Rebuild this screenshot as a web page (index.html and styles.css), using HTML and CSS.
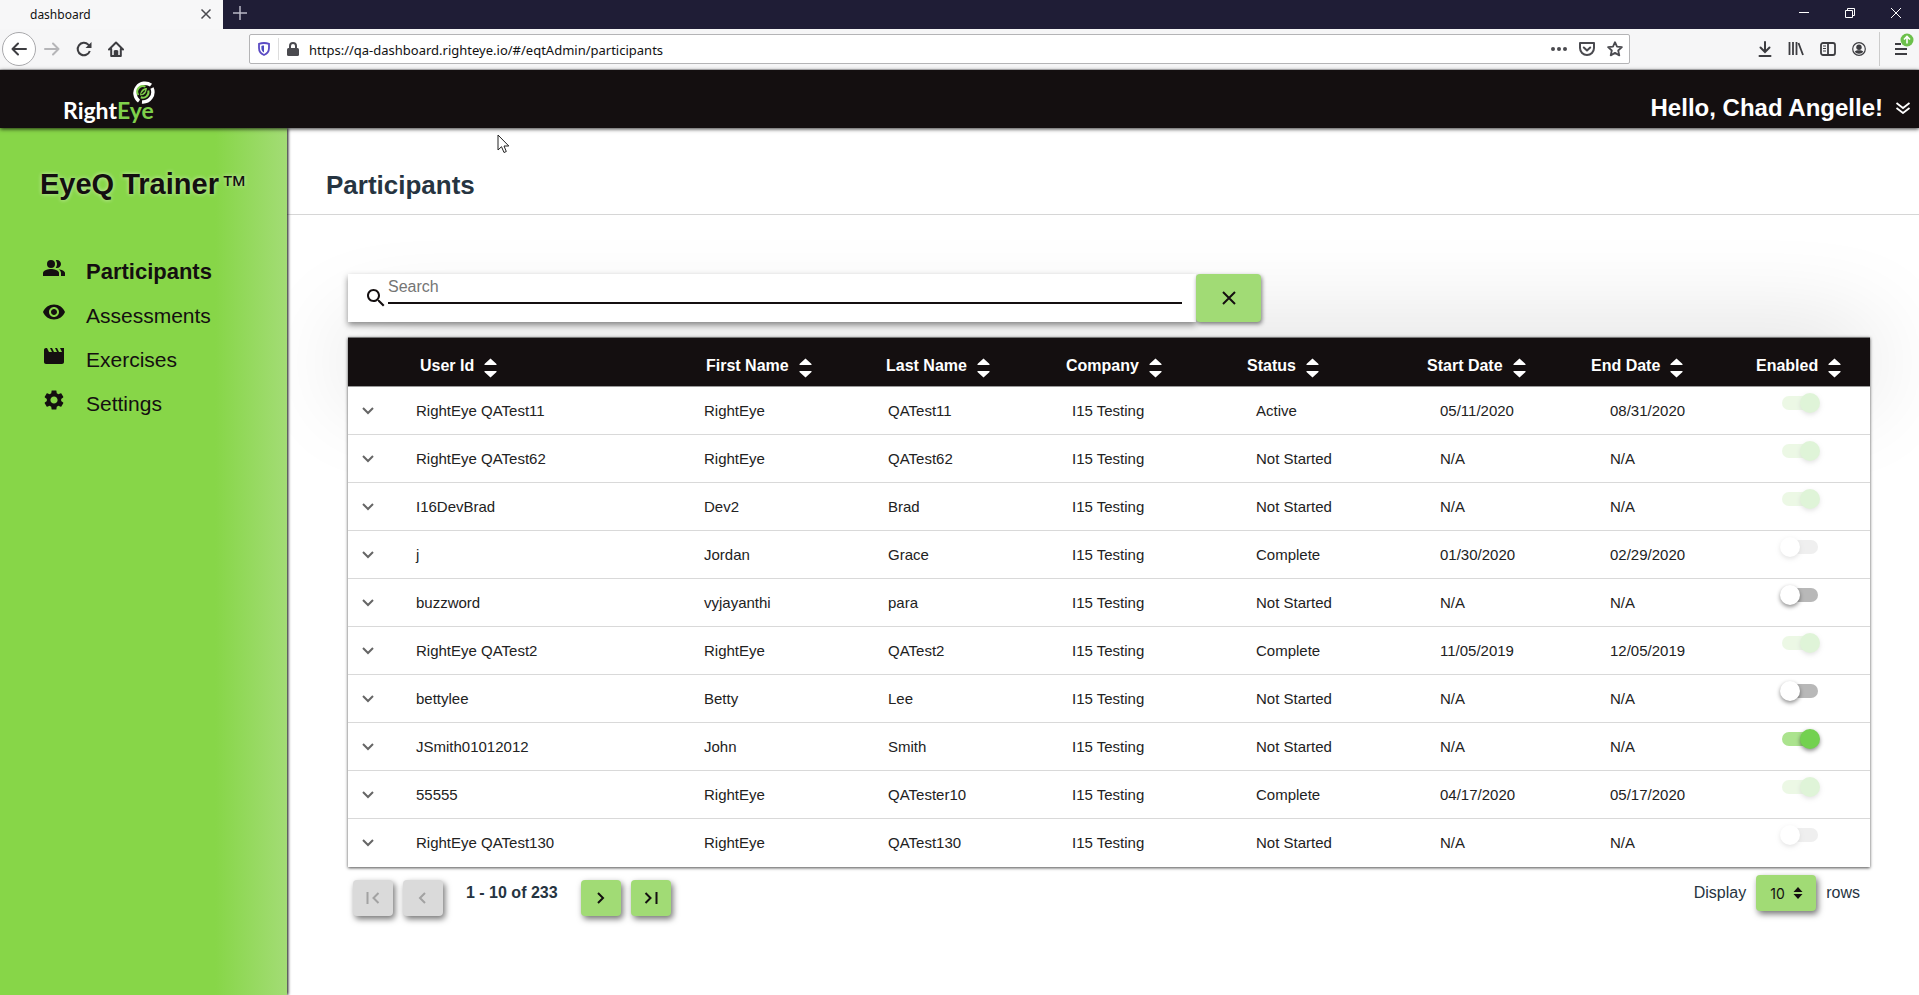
FILE: index.html
```html
<!DOCTYPE html>
<html lang="en">
<head>
<meta charset="utf-8">
<title>dashboard</title>
<link rel="stylesheet" href="styles.css">
</head>
<body>
<div class="chrome">
  <div class="tabstrip">
    <div class="tab"><span>dashboard</span>
      <button class="plain" aria-label="Close tab"><svg width="12" height="12" viewBox="0 0 12 12"><path d="M1.500 1.500l9 9M10.500 1.500l-9 9" stroke="#4a4a4f" stroke-width="1.500"/></svg></button>
    </div>
    <button class="plain newtab" aria-label="New tab"><svg width="14" height="14" viewBox="0 0 14 14"><path d="M7 0v14M0 7h14" stroke="#b9b8c6" stroke-width="1.500"/></svg></button>
    <div class="winctl">
      <button class="plain" aria-label="Minimize"><svg width="12" height="12" viewBox="0 0 12 12"><path d="M1 5.500h10" stroke="#fff"/></svg></button>
      <button class="plain" aria-label="Restore"><svg width="12" height="12" viewBox="0 0 12 12" fill="none" stroke="#fff"><path d="M1.500 3.500h7v7h-7zM3.500 3.500v-2h7v7h-2"/></svg></button>
      <button class="plain" aria-label="Close"><svg width="12" height="12" viewBox="0 0 12 12"><path d="M1 1l10 10M11 1L1 11" stroke="#fff"/></svg></button>
    </div>
  </div>
  <div class="toolbar">
    <div class="navbtns">
      <button class="plain back" aria-label="Back"><svg width="16" height="16" viewBox="0 0 16 16" fill="none" stroke="#3d3d41" stroke-width="2" stroke-linecap="round" stroke-linejoin="round"><path d="M15 8H1.500M7 2.500L1.500 8 7 13.500"/></svg></button>
      <button class="plain" aria-label="Forward"><svg width="16" height="16" viewBox="0 0 16 16" fill="none" stroke="#b5b5b8" stroke-width="2" stroke-linecap="round" stroke-linejoin="round"><path d="M1 8h13.500M9 2.500L14.500 8 9 13.500"/></svg></button>
      <button class="plain" aria-label="Reload"><svg width="16" height="16" viewBox="0 0 16 16" fill="none" stroke="#3d3d41" stroke-width="2"><path d="M13.800 10A6.200 6.200 0 1 1 12.300 3.600L14 5.500"/><path d="M15.500 1v6h-6z" fill="#3d3d41" stroke="none"/></svg></button>
      <button class="plain" aria-label="Home"><svg width="16" height="16" viewBox="0 0 16 16" fill="none" stroke="#3d3d41" stroke-width="2" stroke-linejoin="round" stroke-linecap="round"><path d="M1 8.500L8 1.500l7 7M3.200 8v7h9.600V8M8 14v-4"/><path d="M6.500 15v-5h3v5" stroke-width="1.500"/></svg></button>
    </div>
    <div class="urlbar">
      <svg width="12" height="14" viewBox="0 0 12 14" fill="none"><path d="M6 1c2 0 3.500.3 5 .9V6c0 3.500-2 5.800-5 7-3-1.200-5-3.500-5-7V1.900C2.500 1.300 4 1 6 1z" stroke="#5b4bc4" stroke-width="1.800"/><path d="M6 3.500v7C4.300 9.500 3.400 8 3.400 6V3.900c.8-.3 1.600-.4 2.600-.4z" fill="#4b4bc0"/></svg>
      <span class="sep"></span>
      <svg width="12" height="14" viewBox="0 0 12 14"><path d="M3 7V4a3 3 0 0 1 6 0v3" fill="none" stroke="#4a4a4f" stroke-width="2"/><rect y="6" width="12" height="8" rx="1.500" fill="#4a4a4f"/></svg>
      <input class="url" aria-label="Address" value="https://qa-dashboard.righteye.io/#/eqtAdmin/participants">
      <svg width="16" height="16" viewBox="0 0 16 16" fill="#4a4a4f"><circle cx="2" cy="8" r="2"/><circle cx="8" cy="8" r="2"/><circle cx="14" cy="8" r="2"/></svg>
      <svg width="16" height="16" viewBox="0 0 16 16" fill="none" stroke="#4a4a4f" stroke-width="2" stroke-linecap="round" stroke-linejoin="round"><path d="M1 2h14v5a7 7 0 0 1-14 0z"/><path d="M4.800 6.500L8 9.500l3.200-3"/></svg>
      <svg width="16" height="16" viewBox="0 0 16 16" fill="none" stroke="#4a4a4f" stroke-width="1.800" stroke-linejoin="round"><path d="M8 1.200l2 4.500 4.900.5-3.700 3.300 1.100 4.900L8 11.900l-4.300 2.500 1.100-4.900L1.100 6.200 6 5.700z"/></svg>
    </div>
    <div class="tools">
      <button class="plain" aria-label="Downloads"><svg width="14" height="16" viewBox="0 0 14 16" fill="none" stroke="#3d3d41" stroke-width="2" stroke-linecap="round"><path d="M7 1v9.500M2.500 6.500L7 11l4.500-4.500M1.500 15h11"/></svg></button>
      <button class="plain" aria-label="Library"><svg width="16" height="16" viewBox="0 0 16 16" fill="none" stroke="#3d3d41" stroke-width="1.800"><path d="M1.500 1v13M5 1v13M8.500 1v13M10.500 2l4.500 12"/></svg></button>
      <button class="plain" aria-label="Sidebars"><svg width="16" height="16" viewBox="0 0 16 16" fill="none" stroke="#3d3d41" stroke-width="1.800"><rect x="1" y="2" width="14" height="12" rx="2"/><path d="M8 2v12"/><path d="M3 5h3M3 7.500h3M3 10h3" stroke-width="1"/></svg></button>
      <button class="plain" aria-label="Account"><svg width="14" height="14" viewBox="0 0 14 14"><circle cx="7" cy="7" r="6.300" fill="none" stroke="#3d3d41" stroke-width="1.200"/><circle cx="7" cy="5.200" r="2.700" fill="#3d3d41"/><path d="M2.800 9.500c1.500-1.600 6.900-1.600 8.400 0-1.300 3-7.100 3-8.400 0z" fill="#3d3d41"/></svg></button>
      <button class="plain menu" aria-label="Open menu"><svg width="20" height="24" viewBox="0 0 20 24"><path d="M1 11h6M1 16h12M1 21h12" stroke="#3d3d41" stroke-width="2"/><circle cx="13" cy="7" r="6.500" fill="#6cc04a"/><path d="M13 10.500V4M10 6.500l3-3 3 3" fill="none" stroke="#fff" stroke-width="1.600"/></svg></button>
    </div>
  </div>
</div>

<header class="appbar">
  <a class="logo" href="#" aria-label="RightEye"><span>Right</span><span class="eye">Eye</span>
    <svg class="ring" width="24" height="24" viewBox="0 0 24 24" fill="none"><path d="M20 5.200A10 10 0 1 0 8 21.200" stroke="#fff" stroke-width="3.400"/><path d="M11 22A10 10 0 0 0 21 8" stroke="#fff" stroke-width="3.400"/><path d="M14.500 6.700A5.600 5.600 0 0 0 7.400 15M9.800 17.200A5.600 5.600 0 0 0 17.300 10.500" stroke="#7fd04b" stroke-width="2"/><path d="M16 8c-4 0-6.500 2-7 7.500 5 0 6.500-3 7-7.500z" fill="#7fd04b"/><path d="M10.500 13.800L13.800 10.500" stroke="#140f10" stroke-width="1.200"/></svg>
  </a>
  <button class="plain user">Hello, Chad Angelle!<svg width="16" height="12" viewBox="0 0 16 12" fill="none" stroke="#fff" stroke-width="1.800"><path d="M1.500 1L8 6l6.500-5M1.500 6L8 11l6.500-5"/></svg></button>
</header>

<div class="body">
  <nav class="side">
    <h1>EyeQ Trainer<span class="tm">™</span></h1>
    <ul>
      <li><a class="on" href="#"><svg width="24" height="24" viewBox="0 0 24 24"><path d="M16.670 13.130C18.040 14.060 19 15.320 19 17v3h4v-3c0-2.180-3.570-3.470-6.330-3.870zM15 12c2.210 0 4-1.790 4-4s-1.790-4-4-4c-.47 0-.91.1-1.330.24C14.500 5.270 15 6.580 15 8s-.5 2.730-1.330 3.760c.42.140.86.240 1.330.24z"/><circle cx="9" cy="8" r="4"/><path d="M9 13c-2.670 0-8 1.340-8 4v3h16v-3c0-2.660-5.330-4-8-4z"/></svg><span>Participants</span></a></li>
      <li><a href="#"><svg width="24" height="24" viewBox="0 0 24 24"><path d="M12 4.500C7 4.500 2.730 7.610 1 12c1.730 4.390 6 7.500 11 7.500s9.270-3.110 11-7.500c-1.730-4.390-6-7.500-11-7.500zM12 17c-2.760 0-5-2.240-5-5s2.240-5 5-5 5 2.240 5 5-2.240 5-5 5zm0-8c-1.660 0-3 1.340-3 3s1.340 3 3 3 3-1.340 3-3-1.340-3-3-3z"/></svg><span>Assessments</span></a></li>
      <li><a href="#"><svg width="24" height="24" viewBox="0 0 24 24"><path d="M18 4l2 4h-3l-2-4h-2l2 4h-3l-2-4H8l2 4H7L5 4H4c-1.100 0-1.990.9-1.990 2L2 18c0 1.100.9 2 2 2h16c1.100 0 2-.9 2-2V4h-4z"/></svg><span>Exercises</span></a></li>
      <li><a href="#"><svg width="24" height="24" viewBox="0 0 24 24"><path d="M19.140 12.940c.04-.3.060-.61.060-.94 0-.32-.02-.64-.07-.94l2.030-1.580c.18-.14.230-.41.120-.61l-1.920-3.320c-.12-.22-.37-.29-.59-.22l-2.390.96c-.5-.38-1.030-.7-1.620-.94l-.36-2.540c-.04-.24-.24-.41-.48-.41h-3.840c-.24 0-.43.170-.47.410l-.36 2.540c-.59.240-1.130.570-1.620.94l-2.390-.96c-.22-.08-.47 0-.59.220L2.740 8.870c-.12.210-.08.470.12.610l2.030 1.580c-.05.3-.09.630-.09.940s.02.640.07.940l-2.030 1.580c-.18.140-.23.410-.12.610l1.920 3.320c.12.220.37.290.59.220l2.390-.96c.5.380 1.030.7 1.620.94l.36 2.540c.05.240.24.410.48.410h3.840c.24 0 .44-.17.47-.41l.36-2.540c.59-.24 1.130-.56 1.620-.94l2.390.96c.22.080.47 0 .59-.22l1.920-3.320c.12-.22.070-.47-.12-.61l-2.010-1.580zM12 15.600c-1.980 0-3.600-1.620-3.600-3.600s1.620-3.600 3.600-3.600 3.600 1.620 3.600 3.600-1.620 3.600-3.600 3.600z"/></svg><span>Settings</span></a></li>
    </ul>
  </nav>

  <main class="main">
    <h2>Participants</h2>
    <section class="content">
      <div class="searchrow">
        <div class="searchcard">
          <svg width="24" height="24" viewBox="0 0 24 24" fill="#140f10"><path d="M15.500 14h-.79l-.28-.27C15.410 12.590 16 11.110 16 9.500 16 5.910 13.090 3 9.500 3S3 5.910 3 9.500 5.910 16 9.500 16c1.610 0 3.090-.59 4.230-1.570l.27.28v.79l5 4.990L20.490 19l-4.990-5zm-6 0C7.010 14 5 11.990 5 9.500S7.010 5 9.500 5 14 7.010 14 9.500 11.990 14 9.500 14z"/></svg>
          <input type="text" placeholder="Search" aria-label="Search">
        </div>
        <button class="clear" aria-label="Clear search"><svg width="14" height="14" viewBox="0 0 14 14"><path d="M1 1l12 12M13 1L1 13" stroke="#140f10" stroke-width="2"/></svg></button>
      </div>

      <table class="grid">
        <colgroup><col class="c0"><col class="c1"><col class="c2"><col class="c2"><col class="c2"><col class="c2"><col class="c6"><col class="c7"><col class="c8"></colgroup>
        <thead><tr id="head"></tr></thead>
        <tbody id="rows"></tbody>
      </table>

      <div class="pager">
        <div class="pages">
          <button disabled aria-label="First page"><svg width="14" height="12" viewBox="0 0 14 12"><path d="M1.500 0v12M12.500 1l-5 5 5 5"/></svg></button>
          <button disabled aria-label="Previous page"><svg width="14" height="12" viewBox="0 0 14 12"><path d="M9 1L4 6l5 5"/></svg></button>
          <strong>1 - 10 of 233</strong>
          <button aria-label="Next page"><svg width="14" height="12" viewBox="0 0 14 12"><path d="M4 1l5 5-5 5"/></svg></button>
          <button aria-label="Last page"><svg width="14" height="12" viewBox="0 0 14 12"><path d="M1.500 1l5 5-5 5M12.500 0v12"/></svg></button>
        </div>
        <div class="size">
          <label for="size">Display</label>
          <span class="pick"><select id="size"><option>10</option><option>25</option><option>50</option></select>
            <svg width="10" height="12" viewBox="0 0 10 12"><path d="M5 0l4.500 5h-9zM5 12l4.500-5h-9z" fill="#140f10"/></svg></span>
          <span>rows</span>
        </div>
      </div>
    </section>
  </main>
</div>
<svg class="pointer" width="13" height="20" viewBox="0 0 13 20"><path d="M1 1v15l3.500-3.300L7 18.500l2.300-1L7 12h4.800z" fill="#fff" stroke="#222"/></svg>
<script src="app.js"></script>
</body>
</html>
```

FILE: app.js
```javascript
const heads = ["User Id", "First Name", "Last Name", "Company", "Status", "Start Date", "End Date", "Enabled"];
const data = [
  ["RightEye QATest11", "RightEye", "QATest11", "Active", "05/11/2020", "08/31/2020", 1, 1],
  ["RightEye QATest62", "RightEye", "QATest62", "Not Started", "N/A", "N/A", 1, 1],
  ["I16DevBrad", "Dev2", "Brad", "Not Started", "N/A", "N/A", 1, 1],
  ["j", "Jordan", "Grace", "Complete", "01/30/2020", "02/29/2020", 0, 1],
  ["buzzword", "vyjayanthi", "para", "Not Started", "N/A", "N/A", 0, 0],
  ["RightEye QATest2", "RightEye", "QATest2", "Complete", "11/05/2019", "12/05/2019", 1, 1],
  ["bettylee", "Betty", "Lee", "Not Started", "N/A", "N/A", 0, 0],
  ["JSmith01012012", "John", "Smith", "Not Started", "N/A", "N/A", 1, 0],
  ["55555", "RightEye", "QATester10", "Complete", "04/17/2020", "05/17/2020", 1, 1],
  ["RightEye QATest130", "RightEye", "QATest130", "Not Started", "N/A", "N/A", 0, 1]
];
const sortIcon = '<svg width="13" height="20" viewBox="0 0 13 20" fill="#fff"><path d="M6.500.5L12.500 6v1H.5V6zM6.500 19.500L12.500 14v-1H.5v1z"/></svg>';
const chevron = '<svg width="12" height="8" viewBox="0 0 12 8" fill="none" stroke="#666" stroke-width="2"><path d="M1 1l5 5 5-5"/></svg>';
document.getElementById("head").innerHTML = "<th></th>" + heads.map((h, i) =>
  `<th class="h${i + 1}" scope="col"><button class="plain sort">${h}${sortIcon}</button></th>`).join("");
document.getElementById("rows").innerHTML = data.map(r => {
  const [id, first, last, status, start, end, on, locked] = r;
  const cells = [id, first, last, "I15 Testing", status, start, end].map(c => `<td>${c}</td>`).join("");
  return `<tr><td class="exp"><button class="plain" aria-label="Expand ${id}">${chevron}</button></td>${cells}` +
    `<td class="tog"><input type="checkbox" class="switch" role="switch" aria-label="Enabled: ${id}"${on ? " checked" : ""}${locked ? " disabled" : ""}></td></tr>`;
}).join("");
```

FILE: styles.css
```css
* { box-sizing: border-box; }
body {
  margin: 0;
  min-height: 100vh;
  display: flex;
  flex-direction: column;
  font-family: "Liberation Sans", Arial, sans-serif;
  font-size: 16px;
  color: #263441;
  background: #fff;
}
svg { display: block; flex: none; }
.plain {
  display: flex;
  align-items: center;
  justify-content: center;
  padding: 0;
  border: 0;
  background: none;
  color: inherit;
  font: inherit;
}

/* browser frame */
.chrome { font-family: "Noto Sans", sans-serif; font-size: 12px; border-bottom: 1px solid #c8c8ca; }
.tabstrip { display: flex; align-items: center; height: 29px; background: #1f1d36; }
.tab {
  display: flex;
  align-items: center;
  justify-content: space-between;
  align-self: stretch;
  width: 223px;
  padding: 0 11px 1px 30px;
  background: #f7f7f8;
  color: #111;
}
.newtab { margin: 0 auto 4px 10px; }
.winctl { display: flex; gap: 34px; padding: 0 17px 4px 0; }
.toolbar { display: flex; align-items: center; height: 40px; background: #f6f6f7; }
.navbtns { display: flex; align-items: center; gap: 16px; width: 249px; padding-left: 2px; }
.back { width: 34px; height: 34px; margin-right: -8px; border: 1px solid #a9a9ac; border-radius: 50%; background: #fff; }
.urlbar {
  display: flex;
  align-items: center;
  gap: 12px;
  flex: 1;
  height: 30px;
  padding: 0 6px 0 8px;
  border: 1px solid #b4b4b6;
  border-radius: 2px;
  background: #fff;
}
.sep { width: 1px; height: 22px; margin: 0 -4px 0 -4px; background: #ddd; }
.url { flex: 1; min-width: 0; padding: 2px 0 0; margin-left: -2px; border: 0; outline: 0; background: none; font: 13px "Noto Sans", sans-serif; color: #111; }
.tools { display: flex; align-items: center; gap: 16px; width: 289px; justify-content: flex-end; padding-right: 5px; }
.menu { padding: 0 0 8px 14px; border-left: 1px solid #ccc; height: 34px; margin-left: -3px; }

/* application bar */
.appbar {
  position: relative;
  z-index: 2;
  display: flex;
  justify-content: space-between;
  align-items: flex-end;
  height: 58px;
  padding: 0 8px 6px 63px;
  background: #140f10;
  color: #fff;
  box-shadow: 0 1px 4px rgba(0, 0, 0, .8);
}
.logo { position: relative; display: flex; color: #fff; font: 700 23px/24px Lato, sans-serif; text-decoration: none; }
.eye { color: #7fd04b; }
.ring { position: absolute; right: -1px; top: -18px; }
.user { gap: 12px; font-size: 24px; font-weight: 700; line-height: 28px; }

.body { flex: 1; display: flex; }
.side {
  position: relative;
  z-index: 1;
  flex: none;
  width: 287px;
  padding: 40px 0 0 40px;
  background: linear-gradient(90deg, #87d648 0, #87d648 75%, #a3dc75 100%);
  box-shadow: 1px 0 3px #000;
  color: #140f10;
}
.side h1 { margin: 0 0 56px; font-size: 29px; line-height: 32px; text-shadow: 0 0 4px rgba(255, 255, 255, .6); }
.tm { margin-left: 2px; font-weight: 400; font-size: 26px; line-height: 26px; }
.side ul { margin: 0; padding: 0; list-style: none; }
.side a { display: flex; gap: 20px; height: 44px; padding-left: 2px; font-size: 21px; line-height: 32px; color: #140f10; text-decoration: none; }
.side a.on { font-size: 22px; font-weight: 700; }
.side a svg { fill: #140f10; }

.main { flex: 1; min-width: 0; }
.main h2 { margin: 0; padding: 43px 39px 14px; font-size: 26px; line-height: 29px; border-bottom: 1px solid #d6d6d6; }
.content { padding: 59px 49px 40px 61px; }
.searchrow { position: relative; z-index: 1; display: flex; width: 60%; height: 48px; margin-bottom: 15px; }
.searchcard {
  flex: 1;
  display: flex;
  align-items: flex-end;
  padding: 0 14px 12px 16px;
  background: #fff;
  box-shadow: 0 3px 6px rgba(0, 0, 0, .45);
}
.searchcard input {
  flex: 1;
  height: 30px;
  margin: 0 0 6px;
  padding: 0 0 2px;
  border: 0;
  border-bottom: 2px solid #140f10;
  outline: 0;
  background: none;
  font: 16px/18px "Liberation Sans", Arial, sans-serif;
}
.searchcard input::placeholder { color: #757575; opacity: 1; }
.clear {
  width: 65px;
  display: flex;
  align-items: center;
  justify-content: center;
  border: 0;
  border-radius: 4px;
  background: #a1db75;
  box-shadow: 1px 2px 4px rgba(0, 0, 0, .5);
}

.grid { width: 100%; table-layout: fixed; border-collapse: separate; border-spacing: 0; font-size: 15px; color: #222; box-shadow: 0 1px 3px rgba(0, 0, 0, .7); }
.c0 { width: 44px; }
.c1 { width: 288px; }
.c2 { width: 184px; }
.c6 { width: 170px; }
.c7 { width: 153px; }
.c8 { width: 131px; }
.grid thead tr { box-shadow: 0 0 100px rgba(0, 0, 0, .2); }
.grid th { height: 50px; padding: 7px 0 0; background: #140f10; border-top: 1px solid #777; border-bottom: 1px solid #999; color: #fff; font-size: 16px; text-align: left; }
.sort { gap: 10px; line-height: 18px; font-weight: 700; }
.sort svg { margin-top: 4px; }
.grid th.h1 { padding-left: 28px; }
.grid th.h2 { padding-left: 26px; }
.grid th.h3 { padding-left: 22px; }
.grid th.h4 { padding-left: 18px; }
.grid th.h5 { padding-left: 15px; }
.grid th.h6 { padding-left: 11px; }
.grid th.h7 { padding-left: 5px; }
.grid th.h8 { padding-left: 17px; }
.grid td { height: 48px; padding: 0 0 0 24px; background: #fff; border-bottom: 1px solid #d9d9d9; }
.grid tbody tr:last-child td { border-bottom-color: #fff; }
.grid td.exp { padding-left: 14px; }
.grid td.tog { padding: 6px 0 0 41px; vertical-align: top; }
.switch {
  appearance: none;
  display: block;
  position: relative;
  width: 40px;
  height: 20px;
  margin: 0;
}
.switch::before { content: ""; position: absolute; left: 2px; top: 3px; width: 36px; height: 14px; border-radius: 7px; background: #b8b8b8; }
.switch::after { content: ""; position: absolute; left: 0; top: 0; width: 20px; height: 20px; border-radius: 50%; background: #fff; box-shadow: 0 2px 4px rgba(0, 0, 0, .45); }
.switch:checked::before { background: #abe38e; }
.switch:checked::after { left: 20px; background: #73d150; }
.switch:disabled { opacity: .22; }

.pager { display: flex; justify-content: space-between; align-items: flex-start; padding: 8px 10px 0 5px; }
.pages { display: flex; gap: 10px; padding-top: 5px; }
.pages strong { padding: 4px 13px 0; line-height: 18px; }
.pages button, .pick select {
  display: flex;
  align-items: center;
  justify-content: center;
  width: 40px;
  height: 36px;
  padding: 0;
  border: 0;
  border-radius: 4px;
  background: #a1db75;
  box-shadow: 2px 3px 6px rgba(0, 0, 0, .55);
}
.pages svg { fill: none; stroke: #140f10; stroke-width: 2; }
.pages button:disabled { background: #dadada; }
.pages button:disabled svg { stroke: #a2a2a2; }
.size { display: flex; align-items: center; gap: 10px; }
.pick { position: relative; }
.pick select { appearance: none; width: 60px; padding-left: 14px; font: 14px Inter, sans-serif; color: #140f10; }
.pick svg { position: absolute; right: 13px; top: 12px; pointer-events: none; }
.pointer { position: absolute; left: 497px; top: 134px; z-index: 3; }
```
